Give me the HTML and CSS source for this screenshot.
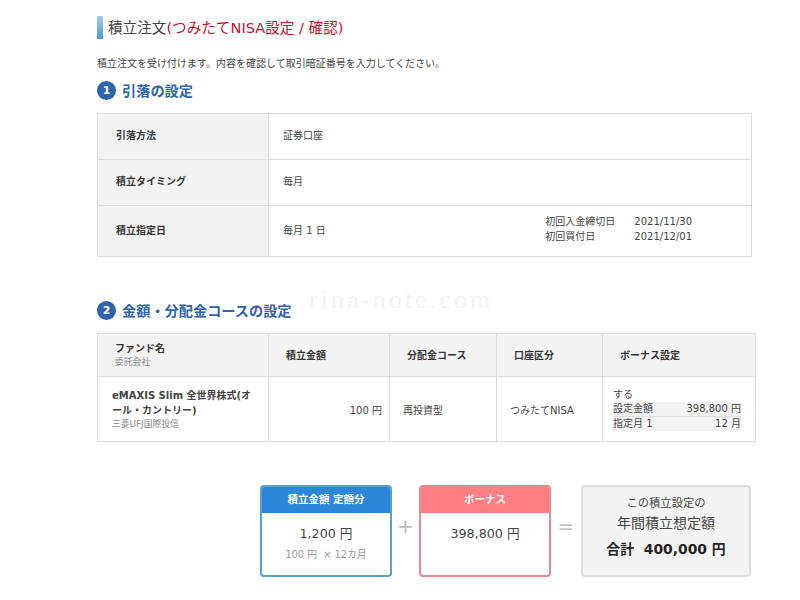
FILE: index.html
```html
<!DOCTYPE html>
<html lang="ja">
<head>
    <meta charset="UTF-8">
    <meta name="viewport" content="width=device-width, initial-scale=1.0">
    <title>積立注文</title>
    <link rel="stylesheet" href="styles.css">
</head>
<body>
    <div class="container">
        <h1 class="page-title">積立注文<span class="accent">(つみたてNISA設定 / 確認)</span></h1>
        <p class="lead">積立注文を受け付けます。内容を確認して取引暗証番号を入力してください。</p>

        <!-- 引落の設定 -->
        <h2 class="step-title"><span class="step-num">1</span>引落の設定</h2>
        <table class="info-table">
            <colgroup><col class="info-label-col"><col></colgroup>
            <tr class="row-a">
                <th>引落方法</th>
                <td>証券口座</td>
            </tr>
            <tr class="row-a">
                <th>積立タイミング</th>
                <td>毎月</td>
            </tr>
            <tr class="row-b">
                <th>積立指定日</th>
                <td>
                    <div class="date-cell">
                        <span>毎月 1 日</span>
                        <dl class="dates">
                            <dt>初回入金締切日</dt><dd>2021/11/30</dd>
                            <dt>初回買付日</dt><dd>2021/12/01</dd>
                        </dl>
                    </div>
                </td>
            </tr>
        </table>

        <div class="watermark">rina-note.com</div>

        <!-- 金額・分配金コースの設定 -->
        <h2 class="step-title step-two"><span class="step-num">2</span>金額・分配金コースの設定</h2>
        <table class="fund-table">
            <colgroup>
                <col class="c-fund"><col class="c-amount"><col class="c-course"><col class="c-account"><col>
            </colgroup>
            <tr>
                <th class="th-fund">ファンド名<small>委託会社</small></th>
                <th>積立金額</th>
                <th>分配金コース</th>
                <th>口座区分</th>
                <th class="th-bonus">ボーナス設定</th>
            </tr>
            <tr>
                <td class="fund-name">eMAXIS Slim 全世界株式(オール・カントリー)<small>三菱UFJ国際投信</small></td>
                <td class="amount">100 円</td>
                <td>再投資型</td>
                <td>つみたてNISA</td>
                <td class="bonus">
                    する
                    <div class="bonus-row"><span>設定金額</span><span>398,800 円</span></div>
                    <div class="bonus-row"><span>指定月 1</span><span>12 月</span></div>
                </td>
            </tr>
        </table>

        <!-- 年間積立想定額 -->
        <div class="summary">
            <div class="card card-blue">
                <div class="card-head">積立金額 定額分</div>
                <div class="card-value">1,200 円</div>
                <div class="card-note">100 円 &nbsp;× 12カ月</div>
            </div>
            <div class="op">+</div>
            <div class="card card-pink">
                <div class="card-head">ボーナス</div>
                <div class="card-value">398,800 円</div>
            </div>
            <div class="op op-eq">=</div>
            <div class="total">
                <div class="total-small">この積立設定の</div>
                <div class="total-mid">年間積立想定額</div>
                <div class="total-big">合計&nbsp; 400,000 円</div>
            </div>
        </div>
    </div>
</body>
</html>
```

FILE: styles.css
```css
* { box-sizing: border-box; }
body { font-family: "DejaVu Sans", "Noto Sans CJK JP", sans-serif; background-color: #fff; color: #444; margin: 0; padding: 0; font-size: 10px; }
.container { position: relative; width: 800px; height: 600px; padding: 16px 44px 0 97px; overflow: hidden; }

.page-title { display: flex; align-items: center; margin: 0; height: 23px; font-size: 14.6px; line-height: 23px; font-weight: normal; color: #444; }
.page-title::before { content: ""; width: 6px; height: 23px; margin-right: 5px; background: linear-gradient(#a3cdea, #4b9ad3); }
.accent { color: #c3112e; }
.lead { margin: 18px 0 0; font-size: 10px; line-height: 14px; color: #444; }

.step-title { display: flex; align-items: center; gap: 6px; margin: 9px 0 0; height: 20px; font-size: 14.2px; font-weight: bold; color: #2e63ae; }
.step-two { margin-top: 43px; }
.step-num { width: 19px; height: 19px; border-radius: 50%; background: #2e63ae; color: #fff; font-size: 11px; line-height: 19px; text-align: center; }

table { border-collapse: collapse; table-layout: fixed; }
th, td { border: 1px solid #ddd; font-size: 10px; }
th { background: #f3f3f3; font-weight: bold; color: #333; text-align: left; }

.info-table { width: 655px; margin-top: 13px; }
.info-label-col { width: 171px; }
.info-table th { padding: 0 0 4px 18px; }
.info-table td { padding: 0 0 4px 14px; }
.row-a { height: 46px; }
.row-b { height: 51px; }
.date-cell { display: flex; justify-content: space-between; align-items: center; padding-right: 59px; }
.dates { display: grid; grid-template-columns: 89px auto; margin: 0; line-height: 15px; }
.dates dd { margin: 0; }

.watermark { position: absolute; top: 286px; left: 309px; font-family: "Liberation Serif", serif; font-size: 26px; line-height: 28px; letter-spacing: 3px; color: #f2f2f2; }

.fund-table { width: 659px; margin-top: 13px; }
.c-fund { width: 171px; }
.c-amount { width: 121px; }
.c-course { width: 107px; }
.c-account { width: 106px; }
.fund-table tr:first-child { height: 43px; }
.fund-table tr:last-child { height: 65px; }
.fund-table th { padding: 0 0 2px 17px; }
.fund-table td { padding-left: 13px; }
.fund-table small { display: block; font-size: 8.8px; font-weight: normal; color: #888; line-height: 12px; }
.fund-table .th-fund { line-height: 15px; }
.fund-table .fund-name { padding: 0 12px 0 14px; font-weight: bold; line-height: 15px; color: #444; }
.fund-table .amount { text-align: right; padding: 0 7px 0 0; }
.fund-table .bonus { padding: 0 14px 0 10px; line-height: 14px; }
.bonus-row { display: flex; justify-content: space-between; background: #f3f3f3; border-bottom: 1px solid #ddd; }
.bonus-row:last-child { border-bottom: 0; }

.summary { display: flex; align-items: stretch; height: 92px; margin-top: 43px; margin-left: 163px; width: 491px; }
.card { width: 132px; border: 2px solid; border-radius: 4px; text-align: center; overflow: hidden; }
.card-blue { border-color: #5f9fd0; }
.card-pink { border-color: #e88a90; }
.card-head { height: 27px; margin: -1px -1px 0; color: #fff; font-size: 10.5px; font-weight: bold; line-height: 26px; }
.card-blue .card-head { background: #2b87d8; }
.card-pink .card-head { background: #fd7f83; }
.card-value { margin-top: 13px; font-size: 12.7px; line-height: 16px; color: #444; }
.card-note { margin-top: 6px; font-size: 9.8px; line-height: 14px; color: #999; }
.op { width: 27px; text-align: center; font-size: 20px; line-height: 82px; color: #bbb; }
.op-eq { width: 30px; }
.total { width: 170px; background: #f3f3f3; border: 2px solid #ddd; border-radius: 4px; text-align: center; padding-top: 9px; }
.total-small { font-size: 11.3px; line-height: 16px; color: #444; }
.total-mid { font-size: 14px; line-height: 22px; color: #444; }
.total-big { margin-top: 5px; font-size: 13.9px; font-weight: bold; line-height: 20px; color: #222; }
```
